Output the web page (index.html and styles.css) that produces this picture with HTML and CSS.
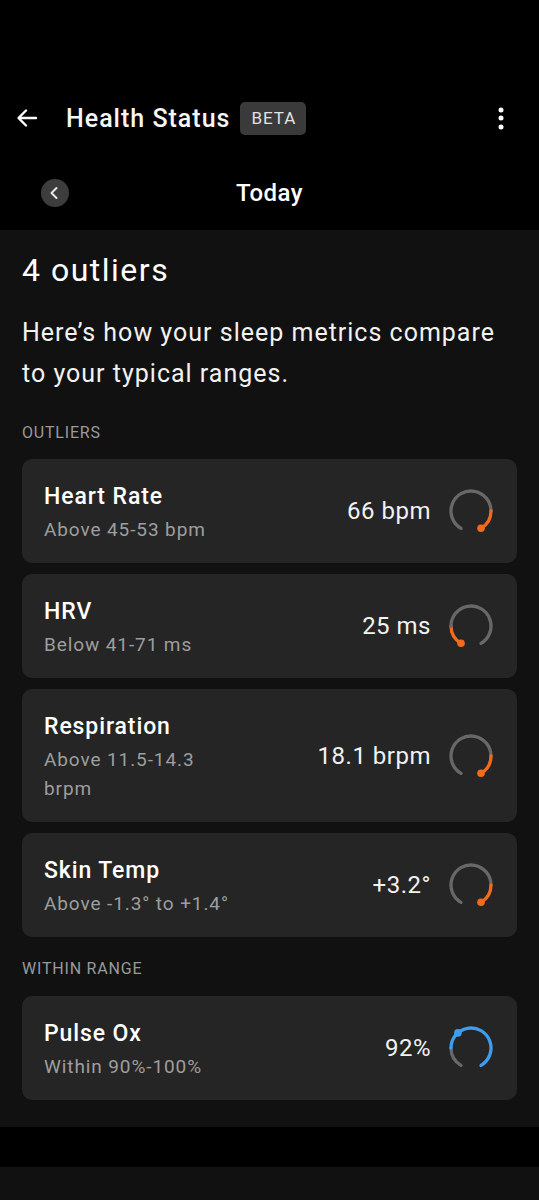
FILE: index.html
```html
<!DOCTYPE html>
<html lang="en">
<head>
    <meta charset="UTF-8">
    <meta name="viewport" content="width=device-width, initial-scale=1.0">
    <title>Health Status</title>
    <link rel="stylesheet" href="styles.css">
</head>
<body>
    <div class="status-space"></div>

    <div class="app-bar">
        <svg class="back" viewBox="0 0 24 24" width="24" height="24">
            <path d="M21 12H4M11 4.5L3.5 12 11 19.5" fill="none" stroke="#fff" stroke-width="2.4" stroke-linecap="round" stroke-linejoin="round"/>
        </svg>
        <span class="title">Health Status</span>
        <span class="badge">BETA</span>
        <svg class="kebab" viewBox="0 0 24 24" width="24" height="24">
            <circle cx="12" cy="4" r="2.5" fill="#fff"/>
            <circle cx="12" cy="12" r="2.5" fill="#fff"/>
            <circle cx="12" cy="21" r="2.5" fill="#fff"/>
        </svg>
    </div>

    <div class="date-row">
        <div class="prev">
            <svg viewBox="0 0 28 28" width="28" height="28">
                <path d="M15.5 9L10.5 14l5 5" fill="none" stroke="#e6e6e6" stroke-width="2" stroke-linecap="round" stroke-linejoin="round"/>
            </svg>
        </div>
        <div class="day">Today</div>
        <div></div>
    </div>

    <div class="panel">
        <h1>4 outliers</h1>
        <p class="intro">Here’s how your sleep metrics compare to your typical ranges.</p>

        <div class="section-label">OUTLIERS</div>

        <div class="card">
            <div class="metric-text">
                <div class="metric-name">Heart Rate</div>
                <div class="metric-range">Above 45-53 bpm</div>
            </div>
            <div class="metric-value">66 bpm</div>
            <svg class="gauge" viewBox="0 0 48 48">
                <path class="track" d="M14 41.32A20 20 0 1 1 44 24"/>
                <path class="hot" d="M44 24A20 20 0 0 1 34 41.32"/>
                <circle class="dot-hot" cx="34" cy="41.32" r="3.8"/>
            </svg>
        </div>

        <div class="card">
            <div class="metric-text">
                <div class="metric-name">HRV</div>
                <div class="metric-range">Below 41-71 ms</div>
            </div>
            <div class="metric-value">25 ms</div>
            <svg class="gauge" viewBox="0 0 48 48">
                <path class="hot" d="M14 41.32A20 20 0 0 1 4 24"/>
                <path class="track" d="M4 24A20 20 0 1 1 34 41.32"/>
                <circle class="dot-hot" cx="14" cy="41.32" r="3.8"/>
            </svg>
        </div>

        <div class="card">
            <div class="metric-text">
                <div class="metric-name">Respiration</div>
                <div class="metric-range">Above 11.5-14.3 brpm</div>
            </div>
            <div class="metric-value">18.1 brpm</div>
            <svg class="gauge" viewBox="0 0 48 48">
                <path class="track" d="M14 41.32A20 20 0 1 1 44 24"/>
                <path class="hot" d="M44 24A20 20 0 0 1 34 41.32"/>
                <circle class="dot-hot" cx="34" cy="41.32" r="3.8"/>
            </svg>
        </div>

        <div class="card">
            <div class="metric-text">
                <div class="metric-name">Skin Temp</div>
                <div class="metric-range">Above -1.3° to +1.4°</div>
            </div>
            <div class="metric-value">+3.2°</div>
            <svg class="gauge" viewBox="0 0 48 48">
                <path class="track" d="M14 41.32A20 20 0 1 1 44 24"/>
                <path class="hot" d="M44 24A20 20 0 0 1 34 41.32"/>
                <circle class="dot-hot" cx="34" cy="41.32" r="3.8"/>
            </svg>
        </div>

        <div class="section-label">WITHIN RANGE</div>

        <div class="card">
            <div class="metric-text">
                <div class="metric-name">Pulse Ox</div>
                <div class="metric-range">Within 90%-100%</div>
            </div>
            <div class="metric-value">92%</div>
            <svg class="gauge" viewBox="0 0 48 48">
                <path class="track" d="M14 41.32A20 20 0 0 1 4 24"/>
                <path class="ok" d="M4 24A20 20 0 1 1 34 41.32"/>
                <circle class="dot-ok" cx="10.88" cy="8.9" r="3.8"/>
            </svg>
        </div>
    </div>

    <div class="gap-bar"></div>
    <div class="panel-foot"></div>
</body>
</html>
```

FILE: styles.css
```css
body {
    margin: 0;
    background: #000;
    color: #fff;
    font-family: Roboto, "Noto Sans", sans-serif;
}
.status-space {
    height: 90px;
}
.app-bar {
    height: 56px;
    display: flex;
    align-items: center;
    padding: 0 26px 0 15px;
}
.back {
    display: block;
}
.app-bar .title {
    margin-left: 27px;
    font-size: 25px;
    font-weight: 500;
    letter-spacing: 1px;
    color: #f5f5f5;
}
.badge {
    margin-left: 10px;
    height: 33px;
    padding: 0 10px 0 11px;
    display: flex;
    align-items: center;
    background: #3a3a3a;
    border-radius: 5px;
    font-size: 17px;
    letter-spacing: 1px;
    color: #e2e2e2;
}
.kebab {
    margin-left: auto;
    display: block;
}
.date-row {
    height: 54px;
    padding: 20px 0 10px;
    display: grid;
    grid-template-columns: 1fr auto 1fr;
    align-items: center;
}
.prev {
    margin-left: 41px;
    width: 28px;
    height: 28px;
    border-radius: 50%;
    background: #3d3d3d;
}
.prev svg {
    display: block;
}
.day {
    font-size: 24px;
    font-weight: 500;
    letter-spacing: 0.5px;
}
.panel {
    background: #111;
    padding: 22px 22px 27px;
}
h1 {
    margin: 0;
    font-size: 32px;
    font-weight: 400;
    line-height: 36px;
    letter-spacing: 1.5px;
}
.intro {
    margin: 24px 0 0;
    font-size: 25px;
    line-height: 41px;
    letter-spacing: 1px;
    color: #f2f2f2;
}
.section-label {
    margin: 29px 0 16px;
    font-size: 16px;
    line-height: 20px;
    letter-spacing: 0.8px;
    color: #9a9a9a;
}
.card + .section-label {
    margin-top: 22px;
    margin-bottom: 17px;
}
.card {
    display: flex;
    align-items: center;
    background: #252525;
    border-radius: 10px;
    padding: 19px 22px;
    margin-bottom: 11px;
}
.metric-text {
    flex: 1;
    padding-top: 5px;
}
.metric-name {
    font-size: 23px;
    font-weight: 500;
    line-height: 28px;
    letter-spacing: 0.9px;
}
.metric-range {
    max-width: 194px;
    margin-top: 4px;
    font-size: 19px;
    line-height: 29px;
    letter-spacing: 0.9px;
    color: #9e9e9e;
}
.metric-value {
    font-size: 24px;
    letter-spacing: 0.5px;
    color: #f2f2f2;
}
.gauge {
    width: 48px;
    height: 48px;
    margin-left: 16px;
    fill: none;
    stroke-width: 3.3;
    stroke-linecap: round;
}
.track {
    stroke: #686868;
}
.hot {
    stroke: #f26b1d;
}
.ok {
    stroke: #3d9df0;
}
.dot-hot {
    fill: #f26b1d;
    stroke: none;
}
.dot-ok {
    fill: #3d9df0;
    stroke: none;
}
.card:last-child {
    margin-bottom: 0;
}
.gap-bar {
    height: 40px;
    background: #000;
}
.panel-foot {
    height: 40px;
    background: #111;
}
```
